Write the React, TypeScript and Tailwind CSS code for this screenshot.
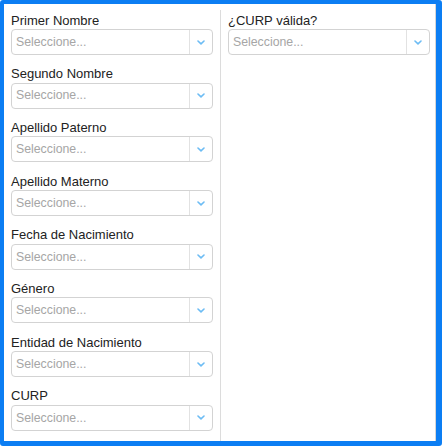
const LEFT_FIELDS = [
  "Primer Nombre",
  "Segundo Nombre",
  "Apellido Paterno",
  "Apellido Materno",
  "Fecha de Nacimiento",
  "Género",
  "Entidad de Nacimiento",
  "CURP",
];

function Chevron() {
  return (
    <svg width="8" height="5" viewBox="0 0 8 5" fill="none">
      <path d="M1 1l3 2.8L7 1" stroke="#6cbcf4" strokeWidth="1.6" strokeLinecap="round" strokeLinejoin="round" />
    </svg>
  );
}

function SelectField({ label }: { label: string }) {
  return (
    <div className="h-[53.7px] flex flex-col">
      <label className="text-[13px] leading-[17px] h-[17px] text-[#222] whitespace-nowrap">{label}</label>
      <div className="mt-[0.5px] h-[26px] flex items-stretch border border-[#d3d3d3] rounded-[4px] bg-white">
        <span className="flex-1 flex items-center pl-[4px] text-[12.3px] text-[#a6a6a6]">Seleccione...</span>
        <span className="w-[23px] flex items-center justify-center border-l border-[#e2e2e2]">
          <Chevron />
        </span>
      </div>
    </div>
  );
}

export default function App() {
  return (
    <div
      className="w-[442px] h-[446px] bg-white"
      style={{ fontFamily: '"Liberation Sans", Arial, sans-serif' }}
    >
      <div className="w-full h-full border-t-4 border-l-4 border-r-[6px] border-b-[5px] border-[#0c7ef3] rounded-[3px] flex">
        <div className="flex-1 flex border-r border-[#d6d6d6] pt-[6px]">
          {/* left column */}
          <div className="w-[217px] border-r border-[#dcdcdc] pl-[7px] pr-[7px] pt-[1.5px]">
            {LEFT_FIELDS.map((f) => (
              <SelectField key={f} label={f} />
            ))}
          </div>
          {/* right column */}
          <div className="flex-1 pl-[7px] pr-[5px] pt-[1.5px]">
            <SelectField label="¿CURP válida?" />
          </div>
        </div>
      </div>
    </div>
  );
}
